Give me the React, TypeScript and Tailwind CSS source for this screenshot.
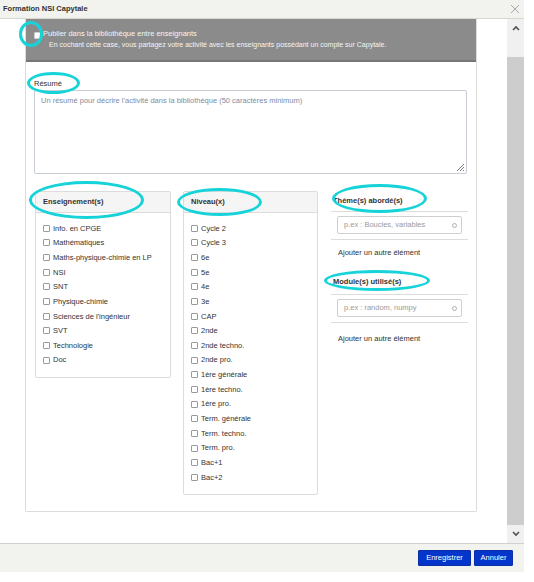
import React from "react";

const ens = [
  "Info. en CPGE",
  "Mathématiques",
  "Maths-physique-chimie en LP",
  "NSI",
  "SNT",
  "Physique-chimie",
  "Sciences de l'ingénieur",
  "SVT",
  "Technologie",
  "Doc",
];

const niv = [
  "Cycle 2",
  "Cycle 3",
  "6e",
  "5e",
  "4e",
  "3e",
  "CAP",
  "2nde",
  "2nde techno.",
  "2nde pro.",
  "1ère générale",
  "1ère techno.",
  "1ère pro.",
  "Term. générale",
  "Term. techno.",
  "Term. pro.",
  "Bac+1",
  "Bac+2",
];

function Box({ title, items, width }: { title: string; items: string[]; width: string }) {
  return (
    <div className={`${width} shrink-0 self-start border border-[#dcdcdc] rounded-[2px] bg-white`}>
      <div className="h-[21px] bg-[#f5f5f5] border-b border-[#dcdcdc] flex items-center pl-[7px] text-[7.5px] font-bold text-[#333]">
        {title}
      </div>
      <div className="pt-[8px] pb-[9px] pl-[7px]">
        {items.map((it) => (
          <div key={it} className="h-[14.67px] flex items-center gap-[3px]">
            <span className="w-[7px] h-[7px] border border-[#9a9a9a] rounded-[1px] bg-white shrink-0" />
            <span className="text-[7.5px] text-[#333] leading-none">{it}</span>
          </div>
        ))}
      </div>
    </div>
  );
}

function TagInput({ placeholder }: { placeholder: string }) {
  return (
    <div className="pt-[4px] pb-[5px] px-[6px] border-b border-[#dcdcdc]">
      <div className="h-[18px] border border-[#cfcfcf] rounded-[2px] flex items-center justify-between pl-[6px] pr-[4px]">
        <span className="text-[7.5px] text-[#9a9a9a] leading-none">{placeholder}</span>
        <span className="w-[5px] h-[5px] rounded-full border border-[#b0b0b0]" />
      </div>
    </div>
  );
}

function Ring({ c }: { c: string }) {
  return <div className={`absolute border-[3px] border-[#16d3d9] rounded-[50%] pointer-events-none ${c}`} />;
}

export default function App() {
  return (
    <div className="relative w-[534px] h-[582px] bg-white overflow-hidden font-['Liberation_Sans',Arial,sans-serif]">
      <div className="w-[524px] flex flex-col">
        {/* title bar */}
        <div className="h-[19px] bg-[#f2f2ee] border-b border-[#d6d6d2] flex items-center justify-between pl-[3px] pr-[3px]">
          <span className="text-[7.5px] font-bold text-[#333] leading-none">Formation NSI Capytale</span>
          <svg width="10" height="10" viewBox="0 0 10 10" className="mr-[1px]">
            <path d="M1 1 L9 9 M9 1 L1 9" stroke="#a8a8a8" strokeWidth="1" />
          </svg>
        </div>
        {/* body */}
        <div className="h-[524px] flex">
          <div className="w-[507px] overflow-hidden">
            <div className="ml-[25px] w-[452px] h-[493px] border border-t-0 border-[#dcdcdc] rounded-b-[2px]">
              <div className="h-[43px] bg-[#8b8b8b] border-b-2 border-[#767676] pt-[10px] pl-[8px] flex items-start">
                <span className="mt-[3px] w-[7px] h-[7px] bg-white border border-[#d0d0d0] rounded-[1px] shrink-0" />
                <div className="ml-[2px] text-[#f5f5f5]">
                  <div className="text-[7.5px] leading-[10px]">Publier dans la bibliothèque entre enseignants</div>
                  <div className="text-[7px] leading-[10px] mt-[1px] pl-[6px]">
                    En cochant cette case, vous partagez votre activité avec les enseignants possédant un compte sur Capytale.
                  </div>
                </div>
              </div>
              <div className="pl-[8px] pr-[9px] pt-[17px]">
                <div className="text-[7.5px] leading-[10px] text-[#333]">Résumé</div>
                <div className="relative mt-[1px] h-[84px] border border-[#c9ced6] rounded-[2px] px-[6px] pt-[5px]">
                  <div className="text-[7.5px] leading-[10px] text-[#7f8ca3]">
                    Un résumé pour décrire l'activité dans la bibliothèque (50 caractères minimum)
                  </div>
                  <svg width="9" height="9" viewBox="0 0 9 9" className="absolute right-[1px] bottom-[1px]">
                    <path d="M8 1 L1 8 M8 4 L4 8 M8 7 L7 8" stroke="#777" strokeWidth="1" />
                  </svg>
                </div>
                <div className="mt-[17px] ml-[1px] flex">
                  <Box title="Enseignement(s)" items={ens} width="w-[136px]" />
                  <div className="w-[12px] shrink-0" />
                  <Box title="Niveau(x)" items={niv} width="w-[135px]" />
                  <div className="w-[13px] shrink-0" />
                  <div className="w-[137px] shrink-0 self-start">
                    <div className="h-[21px] border-b border-[#dcdcdc] flex items-center pl-[2px] text-[7.5px] font-bold text-[#333]">
                      Thème(s) abordé(s)
                    </div>
                    <TagInput placeholder="p.ex : Boucles, variables" />
                    <div className="h-[33px] pt-[8px] pl-[7px] text-[7.5px] leading-[10px] text-[#333]">
                      Ajouter un autre élément
                    </div>
                    <div className="h-[22px] pb-[3px] border-b border-[#dcdcdc] flex items-center pl-[2px] text-[7.5px] font-bold text-[#333]">
                      Module(s) utilisé(s)
                    </div>
                    <TagInput placeholder="p.ex : random, numpy" />
                    <div className="pt-[11px] pl-[7px] text-[7.5px] leading-[10px] text-[#333]">
                      Ajouter un autre élément
                    </div>
                  </div>
                </div>
              </div>
            </div>
          </div>
          {/* scrollbar */}
          <div className="w-[17px] bg-[#f0f0f0] flex flex-col">
            <div className="h-[17px] flex items-center justify-center">
              <svg width="8" height="6" viewBox="0 0 8 6">
                <path d="M1 5 L4 2 L7 5" stroke="#505050" strokeWidth="1.6" fill="none" />
              </svg>
            </div>
            <div className="h-[21px]" />
            <div className="flex-1 bg-[#cdcdcd]" />
            <div className="h-[18px] flex items-center justify-center">
              <svg width="8" height="6" viewBox="0 0 8 6">
                <path d="M1 1 L4 4 L7 1" stroke="#505050" strokeWidth="1.6" fill="none" />
              </svg>
            </div>
          </div>
        </div>
        {/* footer */}
        <div className="h-[29px] bg-[#f2f2ee] border-t border-[#d0d0cc] flex justify-end items-start pt-[6px] pr-[11px] gap-[3px]">
          <button className="h-[16px] w-[53px] bg-[#0536cc] border border-[#0a2fa6] text-white text-[7.5px] rounded-[1px]">
            Enregistrer
          </button>
          <button className="h-[16px] w-[39px] bg-[#0536cc] border border-[#0a2fa6] text-white text-[7.5px] rounded-[1px]">
            Annuler
          </button>
        </div>
      </div>

      <Ring c="left-[19px] top-[21px] w-[24px] h-[26px]" />
      <Ring c="left-[27px] top-[72px] w-[53px] h-[22px]" />
      <Ring c="left-[29px] top-[181px] w-[115px] h-[38px]" />
      <Ring c="left-[177px] top-[188px] w-[85px] h-[28px]" />
      <Ring c="left-[332px] top-[184px] w-[95px] h-[29px]" />
      <Ring c="left-[324px] top-[270px] w-[106px] h-[21px]" />
    </div>
  );
}
